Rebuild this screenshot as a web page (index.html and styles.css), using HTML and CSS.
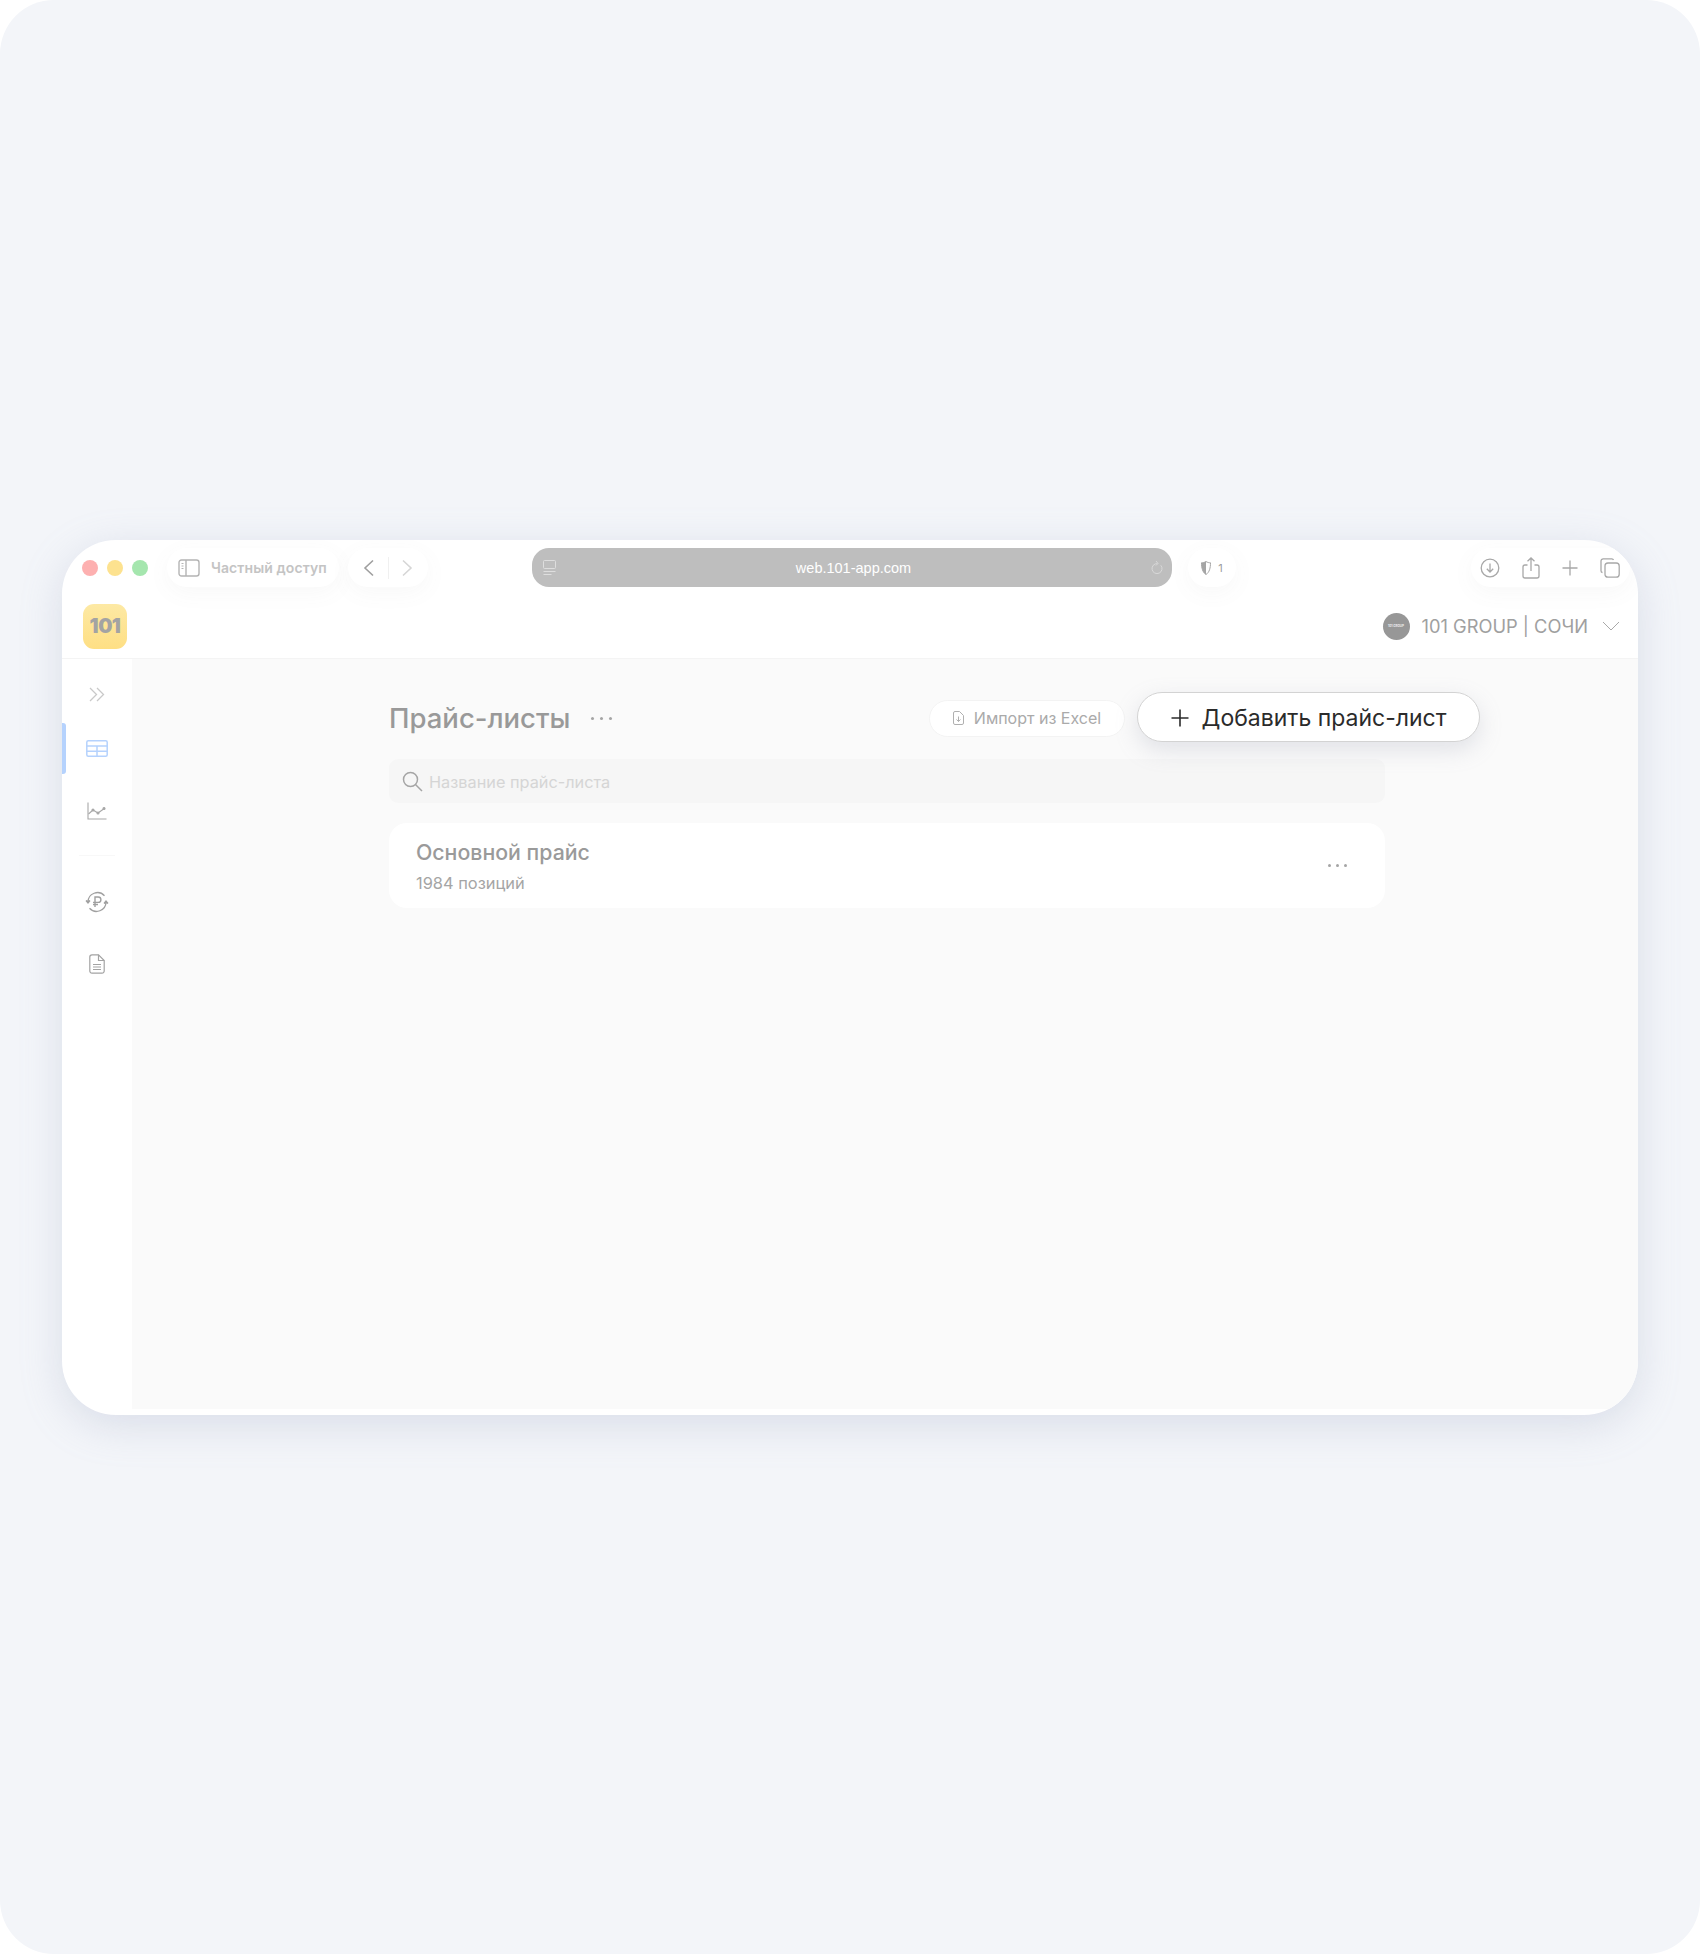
FILE: index.html
```html
<!DOCTYPE html>
<html lang="ru">
<head>
<meta charset="utf-8">
<title>Прайс-листы</title>
<link rel="stylesheet" href="styles.css">
</head>
<body>
<div class="screen">
  <div class="window">
    <div class="browser-bar">
      <div class="lights">
        <span class="light red"></span>
        <span class="light yellow"></span>
        <span class="light green"></span>
      </div>
      <div class="pill private">
        <svg width="22" height="18" viewBox="0 0 22 18" fill="none" stroke="#b4b4b4" stroke-width="1.4"><rect x="1" y="1" width="20" height="16" rx="2.5"/><path d="M8 1v16"/><path d="M3.5 4.5h2M3.5 7h2M3.5 9.5h2" stroke-width="1.1"/></svg>
        <span>Частный доступ</span>
      </div>
      <div class="pill nav">
        <svg width="12" height="18" viewBox="0 0 12 18" fill="none" stroke="#9f9f9f" stroke-width="1.6"><path d="M10 1.5 2 9l8 7.5"/></svg>
        <i class="nav-sep"></i>
        <svg width="12" height="18" viewBox="0 0 12 18" fill="none" stroke="#d6d6d6" stroke-width="1.6"><path d="m2 1.5 8 7.5-8 7.5"/></svg>
      </div>
      <div class="address">
        <svg width="13" height="16" viewBox="0 0 13 16" fill="none" stroke="#dedede" stroke-width="1"><rect x=".5" y=".5" width="12" height="8" rx="1"/><path d="M.5 11.500h12M.5 14.500h8"/></svg>
        <span>web.101-app.com</span>
        <svg width="12" height="16" viewBox="0 0 12 16" fill="none" stroke="#d8d8d8" stroke-width="1"><path d="M9.8 5.300a5 5 0 1 1-3.300-1.700M5 1l2 2.500L5 5.500"/></svg>
      </div>
      <div class="pill shield">
        <svg width="10" height="14" viewBox="0 0 10 14"><path d="M5 .5c1.500 1 3 1.300 4.500 1.300 0 5-1 9.500-4.500 11.700C1.500 11.300.5 6.800.5 1.800 2 1.800 3.500 1.500 5 .5Z" fill="#fff" stroke="#a5a5a5"/><path d="M5 .5c-1.500 1-3 1.300-4.500 1.300 0 5 1 9.500 4.500 11.700Z" fill="#a5a5a5"/></svg>
        <span>1</span>
      </div>
      <div class="pill tools">
        <svg width="20" height="20" viewBox="0 0 20 20" fill="none" stroke="#a8a8a8" stroke-width="1.3"><circle cx="10" cy="10" r="8.800"/><path d="M10 5.500v8.500M6.800 10.800 10 14l3.200-3.200"/></svg>
        <svg width="18" height="22" viewBox="0 0 18 22" fill="none" stroke="#a8a8a8" stroke-width="1.3"><path d="M5.500 8H3a2 2 0 0 0-2 2v9a2 2 0 0 0 2 2h12a2 2 0 0 0 2-2v-9a2 2 0 0 0-2-2h-2.500M9 14V1M5.500 4.300 9 1l3.500 3.300"/></svg>
        <svg width="16" height="16" viewBox="0 0 16 16" fill="none" stroke="#a8a8a8" stroke-width="1.3"><path d="M8 .5v15M.5 8h15"/></svg>
        <svg width="20" height="20" viewBox="0 0 20 20" fill="none" stroke="#a8a8a8" stroke-width="1.3"><path d="M2.500 14.500A1.800 1.800 0 0 1 1 12.700V3a2.200 2.200 0 0 1 2.200-2.200h8.500A1.800 1.800 0 0 1 13.500 2"/><rect x="5" y="5" width="14.200" height="14.200" rx="3"/></svg>
      </div>
    </div>

    <header class="app-header">
      <div class="logo"><span>101</span></div>
      <div class="company">
        <span class="avatar"><b>101 GROUP</b></span>
        <span class="company-name">101 GROUP | СОЧИ</span>
        <svg width="18" height="10" viewBox="0 0 18 10" fill="none" stroke="#a9a9a9" stroke-width="1"><path d="m1 1 8 8 8-8"/></svg>
      </div>
    </header>

    <div class="app-body">
      <nav class="sidebar">
        <div class="side-item expand">
          <svg width="16" height="15" viewBox="0 0 16 15" fill="none" stroke="#c9c9c9" stroke-width="1.3"><path d="m1 1 6.500 6.500L1 14M8 1l6.500 6.500L8 14"/></svg>
        </div>
        <div class="side-item active">
          <svg width="22" height="17" viewBox="0 0 22 17" fill="none" stroke="#b5d2fd" stroke-width="1.5"><rect x=".8" y=".8" width="20.400" height="15.400" rx="1.500"/><path d="M.8 6h20.400M.8 11.200h20.400M11 6v10.200"/></svg>
        </div>
        <div class="side-item">
          <svg width="20" height="18" viewBox="0 0 20 18" fill="none" stroke="#a8a8a8" stroke-width="1.1"><path d="M1 .5V17h18.500"/><path d="m1.500 12 4.500-4 5 3 7-5"/><circle cx="6" cy="8" r="1" fill="#a8a8a8"/><circle cx="11" cy="11" r="1" fill="#a8a8a8"/><circle cx="17" cy="6.500" r="1" fill="#a8a8a8"/></svg>
        </div>
        <i class="side-sep"></i>
        <div class="side-item">
          <svg width="24" height="22" viewBox="0 0 24 22" fill="none" stroke="#a0a0a0" stroke-width="1.3"><path d="M3 11a9.500 9.500 0 0 1 16.500-6.300M21 11a9.500 9.500 0 0 1-16.500 6.300"/><path d="M1 9.500 3 12l2-2.500M19 12.500l2-2.500 2 2.500" fill="#a0a0a0"/><path d="M10 16V6h3.200a2.600 2.600 0 0 1 0 5.400H8M8 13.500h5" stroke-width="1.4"/></svg>
        </div>
        <div class="side-item">
          <svg width="16" height="20" viewBox="0 0 16 20" fill="none" stroke="#a3a3a3" stroke-width="1.2"><path d="M3 .8h6.500L15.200 6.500V17a2.200 2.200 0 0 1-2.200 2.200H3A2.200 2.200 0 0 1 .8 17V3A2.200 2.200 0 0 1 3 .8Z"/><path d="M9.500.8V6.500h5.700M4 10.500h8M4 13h8M4 15.500h8"/></svg>
        </div>
      </nav>

      <main class="content">
        <div class="page-head">
          <h1>Прайс-листы</h1>
          <div class="dots big-dots"><i></i><i></i><i></i></div>
          <div class="head-actions">
            <button class="btn-import">
              <svg width="11" height="14" viewBox="0 0 11 14" fill="none" stroke="#b0b0b0" stroke-width="1"><path d="M2 .5h4.500l4 4V12a1.500 1.500 0 0 1-1.500 1.500H2A1.500 1.500 0 0 1 .5 12V2A1.500 1.500 0 0 1 2 .5Z"/><path d="M5.500 5.500v5M3.500 8.500l2 2 2-2"/></svg>
              Импорт из Excel
            </button>
            <button class="btn-add">
              <svg width="18" height="18" viewBox="0 0 18 18" fill="none" stroke="#2b2b2b" stroke-width="1.6"><path d="M9 .5v17M.5 9h17"/></svg>
              Добавить прайс-лист
            </button>
          </div>
        </div>

        <div class="search">
          <svg width="21" height="21" viewBox="0 0 21 21" fill="none" stroke="#a5a5a5" stroke-width="1.5"><circle cx="8.500" cy="8.500" r="7"/><path d="m13.500 13.500 6.500 6.500"/></svg>
          <span>Название прайс-листа</span>
        </div>

        <div class="price-card">
          <div class="price-info">
            <div class="price-title">Основной прайс</div>
            <div class="price-count">1984 позиций</div>
          </div>
          <div class="dots"><i></i><i></i><i></i></div>
        </div>
      </main>
    </div>
  </div>
</div>
</body>
</html>
```

FILE: styles.css
```css
* {box-sizing: border-box;}

html, body {
  margin: 0;
  height: 100%;
  background: #fff;
}

body {
  font-family: "Inter", "Noto Sans", sans-serif;
  color: #9a9a9a;
}

.screen {
  width: 1700px;
  height: 1954px;
  padding: 540px 62px 0;
  background: #f3f5f9;
  border-radius: 54px;
}

.window {
  height: 875px;
  background: #fff;
  border-radius: 54px;
  box-shadow: 0 10px 40px rgba(150, 160, 190, .28);
  overflow: hidden;
  display: flex;
  flex-direction: column;
}

/* browser bar */
.browser-bar {
  height: 54px;
  padding: 8px 8px 7px 20px;
  display: flex;
  align-items: center;
  flex: none;
}

.lights {
  display: flex;
  gap: 9px;
  margin-right: 19px;
}

.light {
  width: 16px;
  height: 16px;
  border-radius: 50%;
}

.red {background: #fdb0b0;}
.yellow {background: #fde28f;}
.green {background: #a5e6ae;}

.pill {
  height: 39px;
  border-radius: 20px;
  background: #fff;
  display: flex;
  align-items: center;
  box-shadow: 0 6px 22px rgba(120, 120, 120, .05);
}

.private {
  width: 172px;
  padding-left: 11px;
  gap: 11px;
  font-size: 14px;
  font-weight: 600;
  letter-spacing: .1px;
  color: #c4c4c4;
  margin-right: 9px;
  white-space: nowrap;
}

.nav {
  width: 80px;
  justify-content: space-between;
  padding: 0 15px;
  margin-right: 104px;
}

.nav-sep {
  width: 1px;
  height: 22px;
  background: #f0f0f0;
}

.address {
  width: 640px;
  height: 39px;
  border-radius: 17px;
  background: #bebebe;
  color: #fff;
  font-family: "Liberation Sans", sans-serif;
  font-size: 14.5px;
  display: flex;
  align-items: center;
  justify-content: space-between;
  padding: 0 9px 0 11px;
  margin-right: 16px;
}

.shield {
  width: 48px;
  justify-content: center;
  gap: 7px;
  font-size: 11px;
  color: #9c9c9c;
}

.tools {
  margin-left: auto;
  width: 159px;
  padding: 0 10px 0 9px;
  justify-content: space-between;
}

/* app header */
.app-header {
  height: 65px;
  flex: none;
  padding: 0 18px 0 21px;
  border-bottom: 1px solid #f4f4f4;
  display: flex;
  align-items: center;
  justify-content: space-between;
}

.logo {
  width: 44px;
  height: 45px;
  border-radius: 11px;
  background: linear-gradient(#fde9a4, #fedf84);
  display: flex;
  align-items: center;
  justify-content: center;
  font-size: 20px;
  font-weight: 900;
  letter-spacing: -.5px;
  color: #a3a3a3;
}

.company {
  display: flex;
  align-items: center;
  font-size: 18.3px;
  color: #a0a0a0;
}

.avatar {
  width: 27px;
  height: 27px;
  border-radius: 50%;
  background: #979797;
  display: flex;
  align-items: center;
  justify-content: center;
  margin-right: 12px;
}

.avatar b {
  font-size: 3px;
  color: #eee;
  white-space: nowrap;
}

.company-name {
  margin-right: 14px;
}

/* layout */
.app-body {
  flex: 1;
  display: flex;
  min-height: 0;
}

.sidebar {
  width: 70px;
  flex: none;
  padding-top: 10px;
  display: flex;
  flex-direction: column;
  align-items: center;
}

.side-item {
  width: 100%;
  height: 51px;
  display: flex;
  align-items: center;
  justify-content: center;
  position: relative;
  margin-bottom: 11px;
}

.side-item.expand {
  height: 50px;
  margin-bottom: 4px;
}

.side-item.active::before {
  content: "";
  position: absolute;
  left: 0;
  top: 0;
  width: 4px;
  height: 51px;
  background: #b5d2fd;
  border-radius: 0 3px 3px 0;
}

.side-sep {
  width: 36px;
  height: 1px;
  background: #f8f8f8;
  margin: 8px 0 20px;
}

.content {
  flex: 1;
  height: 750px;
  background: #fafafa;
  padding: 33px 0 0 257px;
}

.page-head {
  width: 1091px;
  height: 50px;
  display: flex;
  align-items: center;
}

h1 {
  margin: 1px 21px 0 0;
  font-size: 27.5px;
  font-weight: 500;
  color: #999;
  white-space: nowrap;
}

.dots {
  display: flex;
  gap: 5px;
}

.dots i {
  width: 3px;
  height: 3px;
  border-radius: 50%;
  background: #a5a5a5;
}

.big-dots {
  gap: 6px;
  margin-top: 2px;
}

.head-actions {
  margin-left: auto;
  display: flex;
  align-items: center;
  gap: 12px;
}

button {
  font-family: inherit;
  border-radius: 25px;
  background: #fff;
  display: flex;
  align-items: center;
  white-space: nowrap;
}

.btn-import {
  width: 196px;
  height: 37px;
  margin-top: 2px;
  border: 1px solid #f3f3f3;
  justify-content: center;
  gap: 10px;
  font-size: 16px;
  color: #aaa;
}

.btn-add {
  width: 343px;
  height: 50px;
  padding-top: 2px;
  border: 1px solid #d3d3d3;
  justify-content: center;
  gap: 13px;
  font-size: 23px;
  color: #2b2b2b;
  box-shadow: 0 8px 22px rgba(150, 155, 175, .25);
}

.search {
  width: 996px;
  height: 44px;
  margin-top: 17px;
  padding: 1px 0 0 13px;
  border-radius: 9px;
  background: #f6f6f6;
  display: flex;
  align-items: center;
  gap: 6px;
  font-size: 16.3px;
  color: #d5d5d5;
}

.price-card {
  width: 996px;
  height: 85px;
  margin-top: 20px;
  border-radius: 18px;
  background: #fff;
  padding: 0 38px 0 27px;
  display: flex;
  align-items: center;
  justify-content: space-between;
}

.price-title {
  font-size: 21.3px;
  font-weight: 500;
  color: #9a9a9a;
}

.price-count {
  margin-top: 8px;
  font-size: 16.4px;
  color: #a5a5a5;
}
```
